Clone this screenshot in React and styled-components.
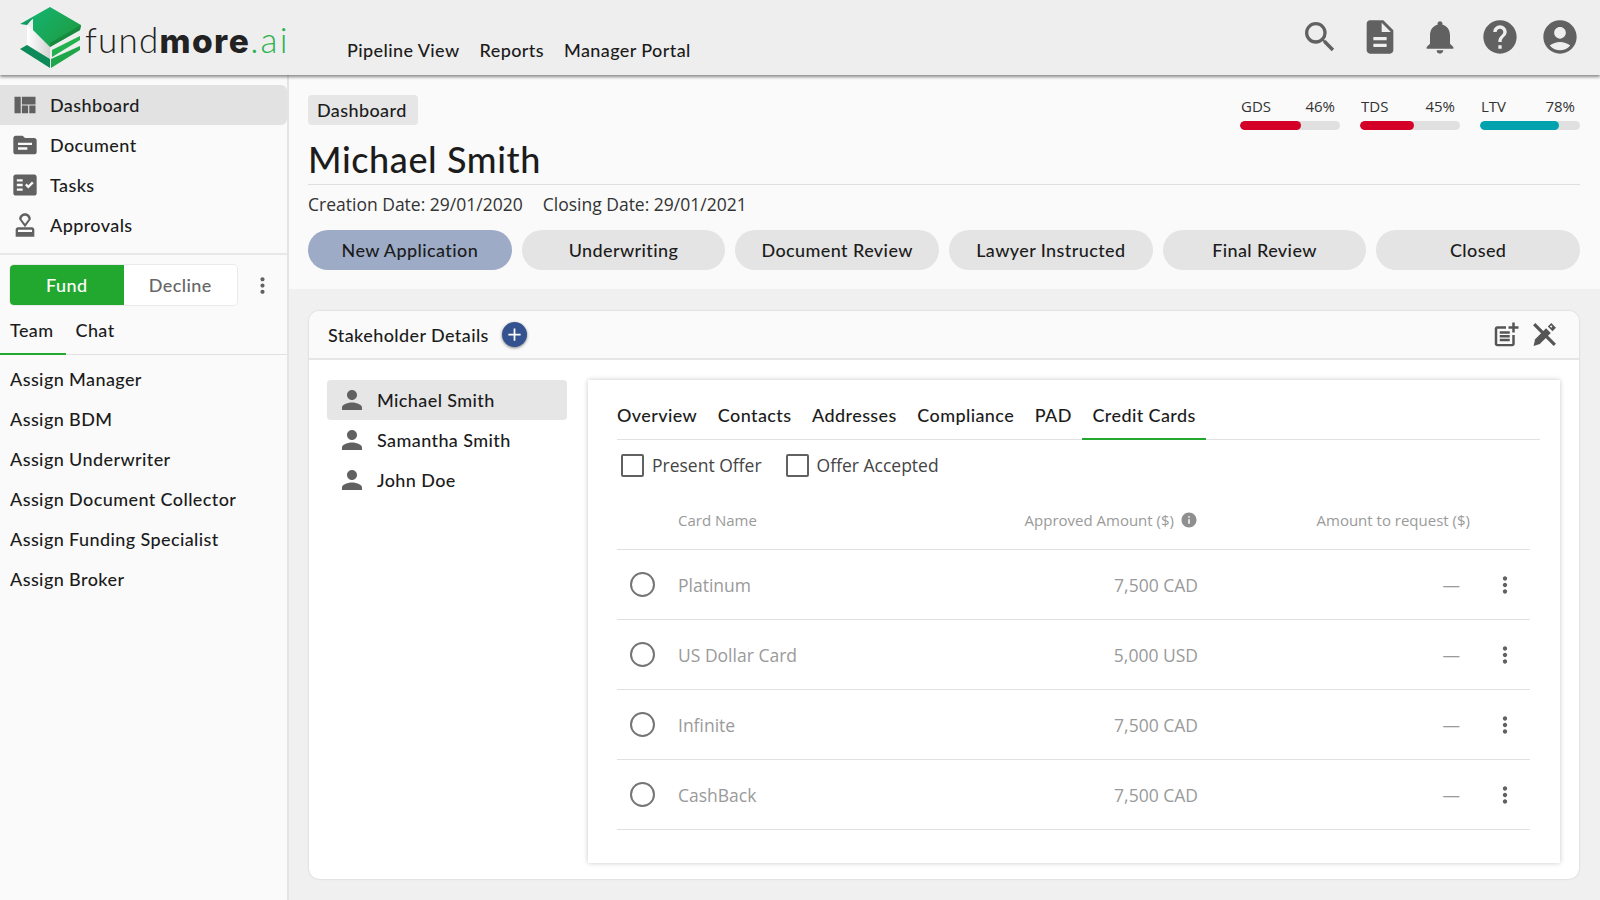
import React from 'react';
import styled, { createGlobalStyle } from 'styled-components';
import {
  MdViewQuilt, MdTopic, MdFactCheck, MdOutlineApproval, MdSearch, MdDescription,
  MdNotifications, MdHelp, MdAccountCircle, MdPerson, MdAdd, MdOutlinePostAdd,
  MdInfo, MdMoreVert,
} from 'react-icons/md';

const HEAD = '"Lato", "Noto Sans", sans-serif';
const BODY = '"Open Sans", "Noto Sans", sans-serif';

const GlobalStyle = createGlobalStyle`
  html, body { margin: 0; padding: 0; background: #f0f0f0; }
  body { font-family: ${HEAD}; color: #1c1c1c; overflow: hidden; letter-spacing: 0.4px; }
  * { box-sizing: border-box; }
`;

const Page = styled.div`
  width: 1600px;
  height: 900px;
  display: flex;
  flex-direction: column;
`;

const Header = styled.header`
  height: 75px;
  flex: none;
  display: flex;
  align-items: stretch;
  background: #eeeeee;
  box-shadow: 0 2px 3px rgba(0, 0, 0, 0.45);
  position: relative;
  z-index: 2;
`;

const Brand = styled.div`
  display: flex;
  align-items: flex-start;
  width: 347px;
`;

const BrandText = styled.div`
  font-family: "Lato", sans-serif;
  font-size: 35px;
  line-height: 1;
  margin: 22px 0 0 -45px;
  letter-spacing: 1.2px;
  font-weight: 300;
  color: #222;
  b { font-weight: 800; font-family: "Inter", sans-serif; font-size: 33.5px; letter-spacing: 1.4px; }
  span { color: #2bb24c; letter-spacing: 2.2px; }
`;

const Nav = styled.nav`
  display: flex;
  gap: 20px;
  padding-top: 40px;
  font-size: 18px;
  font-weight: 500;
  flex: 1;
`;

const NavLink = styled.a`
  line-height: 21px;
  height: 21px;
`;

const HeaderIcons = styled.div`
  display: flex;
  align-items: center;
  gap: 20px;
  padding: 0 20px 2px 0;
  color: #616161;
  height: 75px;
`;

const HeaderIcon = styled.span`
  display: flex;
  width: 40px;
  justify-content: center;
`;

const Body = styled.div`
  flex: 1;
  display: flex;
  min-height: 0;
`;

const Sidebar = styled.aside`
  width: 289px;
  flex: none;
  background: #fafafa;
  border-right: 2px solid #e4e4e4;
  padding-top: 10px;
`;

const MenuItem = styled.div`
  height: 40px;
  display: flex;
  align-items: center;
  padding-left: 11px;
  gap: 11px;
  font-size: 18px;
  font-weight: 500;
  border-radius: 0 6px 6px 0;
  background: ${p => (p.$active ? '#e2e2e2' : 'transparent')};
  svg { color: #616161; flex: none; }
`;

const SideDivider = styled.div`
  height: 2px;
  background: #e8e8e8;
  margin-top: 8px;
`;

const ActionRow = styled.div`
  display: flex;
  align-items: center;
  padding: 10px 0 0 10px;
`;

const ButtonGroup = styled.div`
  display: flex;
  width: 227px;
  height: 40px;
  border-radius: 4px;
  overflow: hidden;
  background: #fff;
  box-shadow: 0 0 0 1px #eaeaea;
`;

const GroupButton = styled.div`
  flex: 1;
  display: flex;
  align-items: center;
  justify-content: center;
  font-size: 18px;
  font-weight: 500;
  background: ${p => (p.$primary ? '#23a82f' : '#fff')};
  color: ${p => (p.$primary ? '#fff' : '#666')};
`;

const DotsButton = styled.span`
  display: flex;
  color: #616161;
  margin-left: ${p => p.$left || 0}px;
`;

const SideTabs = styled.div`
  display: flex;
  height: 50px;
  border-bottom: 1px solid #e2e2e2;
`;

const SideTab = styled.div`
  padding: 14px 12px 0 10px;
  font-size: 18px;
  font-weight: 500;
  height: 50px;
  border-bottom: ${p => (p.$active ? '2px solid #23a82f' : 'none')};
`;

const AssignList = styled.div`
  padding-top: 4px;
`;

const AssignItem = styled.div`
  height: 40px;
  line-height: 40px;
  padding-left: 10px;
  font-size: 18px;
  font-weight: 500;
`;

const Main = styled.main`
  flex: 1;
  display: flex;
  flex-direction: column;
  min-width: 0;
`;

const Summary = styled.section`
  height: 214px;
  flex: none;
  background: #fafafa;
  padding: 20px 20px 0 19px;
`;

const SummaryTop = styled.div`
  display: flex;
  justify-content: space-between;
  height: 35px;
`;

const Chip = styled.div`
  height: 30px;
  padding: 0 11px 0 9px;
  display: flex;
  align-items: center;
  background: #e6e6e6;
  border-radius: 4px;
  font-size: 18px;
  font-weight: 500;
`;

const Stats = styled.div`
  display: flex;
  gap: 20px;
`;

const Stat = styled.div`
  width: 100px;
`;

const StatLabels = styled.div`
  display: flex;
  justify-content: space-between;
  padding: 1px 5px 0 1px;
  height: 26px;
  letter-spacing: 0;
  font: 400 15px/20px ${BODY};
  color: #333;
`;

const StatTrack = styled.div`
  height: 9px;
  border-radius: 5px;
  background: #e0e0e0;
  overflow: hidden;
`;

const StatFill = styled.div`
  height: 100%;
  border-radius: 5px;
  background: ${p => p.$color};
`;

const Name = styled.h1`
  margin: 0;
  font-size: 36px;
  font-weight: 500;
  letter-spacing: 0.6px;
  line-height: 58px;
  height: 55px;
  border-bottom: 1px solid #dfdfdf;
  color: #1c1c1c;
`;

const Dates = styled.div`
  display: flex;
  gap: 20px;
  letter-spacing: 0;
  font: 400 17.5px/39px ${BODY};
  height: 45px;
  color: #333;
`;

const Stages = styled.div`
  display: grid;
  grid-template-columns: repeat(6, 1fr);
  gap: 10px;
`;

const Stage = styled.div`
  height: 40px;
  border-radius: 20px;
  display: flex;
  align-items: center;
  justify-content: center;
  font-size: 18px;
  font-weight: 500;
  background: ${p => (p.$active ? '#9dabc6' : '#e4e4e4')};
`;

const Content = styled.section`
  flex: 1;
  padding: 22px 21px 21px 20px;
  background: #f0f0f0;
  min-height: 0;
  display: flex;
`;

const Card = styled.div`
  flex: 1;
  background: #fff;
  border-radius: 10px;
  box-shadow: 0 0 2px rgba(0, 0, 0, 0.2);
  display: flex;
  flex-direction: column;
  overflow: hidden;
`;

const CardHeader = styled.div`
  height: 49px;
  flex: none;
  background: #fafafa;
  border-bottom: 2px solid #e6e6e6;
  display: flex;
  align-items: center;
  padding: 0 22px 0 19px;
  font-size: 18px;
  font-weight: 500;
`;

const AddButton = styled.span`
  width: 25px;
  height: 25px;
  margin-left: 13px;
  border-radius: 50%;
  background: #33528f;
  color: #fff;
  display: flex;
  align-items: center;
  justify-content: center;
  box-shadow: 0 1px 3px rgba(0, 0, 0, 0.5);
`;

const CardTools = styled.div`
  margin-left: auto;
  display: flex;
  align-items: center;
  gap: 11px;
  color: #555;
`;

const CardBody = styled.div`
  flex: 1;
  display: flex;
  gap: 21px;
  padding: 20px 19px 16px 18px;
  min-height: 0;
`;

const People = styled.div`
  width: 240px;
  flex: none;
`;

const Person = styled.div`
  height: 40px;
  display: flex;
  align-items: center;
  padding-left: 10px;
  gap: 10px;
  font-size: 18px;
  font-weight: 500;
  border-radius: 4px;
  background: ${p => (p.$active ? '#e6e6e6' : 'transparent')};
  svg { color: #616161; }
`;

const Panel = styled.div`
  flex: 1;
  background: #fff;
  box-shadow: 0 0 5px rgba(0, 0, 0, 0.22);
  padding: 0 20px 0 29px;
`;

const Tabs = styled.div`
  display: flex;
  height: 60px;
  border-bottom: 1px solid #e2e2e2;
`;

const Tab = styled.div`
  padding: 24px 10px 0;
  height: 60px;
  font-size: 18px;
  font-weight: 500;
  margin-left: ${p => (p.$first ? '-10px' : '0.6px')};
  border-bottom: ${p => (p.$active ? '2px solid #23a82f' : 'none')};
`;

const Checks = styled.div`
  display: flex;
  height: 50px;
  align-items: center;
  padding-left: 4px;
  gap: 24px;
`;

const Check = styled.label`
  display: flex;
  align-items: center;
  gap: 8px;
  letter-spacing: 0;
  font: 400 17.5px/24px ${BODY};
  color: #444;
`;

const Box = styled.span`
  width: 23px;
  height: 23px;
  border: 2px solid #616161;
  border-radius: 2px;
`;

const TableWrap = styled.div`
  margin-right: 10px;
`;

const Row = styled.div`
  display: grid;
  grid-template-columns: 61px 1fr 220px 272px 60px;
  align-items: center;
  height: ${p => (p.$head ? '60px' : '70px')};
  border-bottom: 1px solid #e0e0e0;
  letter-spacing: 0;
  font: 400 ${p => (p.$head ? '15px' : '17.5px')}/22px ${BODY};
  color: #9a9a9a;
`;

const Radio = styled.span`
  width: 25px;
  height: 25px;
  margin-left: 13px;
  border: 2px solid #757575;
  border-radius: 50%;
`;

const Right = styled.div`
  display: flex;
  justify-content: flex-end;
  align-items: center;
  gap: 6px;
  padding-right: ${p => p.$pad || 0}px;
  svg { color: #8f8f8f; }
`;

const stats = [
  { label: 'GDS', value: 46, fill: 61, color: '#d50027' },
  { label: 'TDS', value: 45, fill: 54, color: '#d50027' },
  { label: 'LTV', value: 78, fill: 79, color: '#00a3ad' },
];

const stages = ['New Application', 'Underwriting', 'Document Review', 'Lawyer Instructed', 'Final Review', 'Closed'];
const assigns = ['Assign Manager', 'Assign BDM', 'Assign Underwriter', 'Assign Document Collector', 'Assign Funding Specialist', 'Assign Broker'];
const cards = [
  ['Platinum', '7,500 CAD'],
  ['US Dollar Card', '5,000 USD'],
  ['Infinite', '7,500 CAD'],
  ['CashBack', '7,500 CAD'],
];

const Logo = () => (
  <svg width="130" height="80" viewBox="0 0 130 80" style={{ flex: 'none' }}>
    <defs>
      <linearGradient id="roof" x1="0" y1="0" x2="1" y2="0.6">
        <stop offset="0" stopColor="#12b878" />
        <stop offset="1" stopColor="#1e9d45" />
      </linearGradient>
      <linearGradient id="wall" x1="0" y1="0" x2="1" y2="0">
        <stop offset="0" stopColor="#ffffff" />
        <stop offset="1" stopColor="#d4d4d4" />
      </linearGradient>
    </defs>
    <polygon points="27,25 50,44 50,59 27,44" fill="url(#wall)" />
    <polygon points="20,24 50,7 81,25 80,30 50,47 33,30 33,19" fill="url(#roof)" />
    <polygon points="20,24 33,18 27,25" fill="#0f9a63" />
    <polygon points="81,25 80,30 50,47 50,43" fill="#178a3f" />
    <polygon points="52,50 80,36 80,40 52,57" fill="#22b14c" />
    <polygon points="51,59 80,46 80,50 51,68" fill="#1fa64a" />
    <polygon points="20,49 27,45 50,59 50,68" fill="#0d8a5a" />
  </svg>
);

const ToolsIcon = () => (
  <svg width="25" height="25" viewBox="0 0 24 24" fill="currentColor">
    <path d="M1 3.2 3.2 1 23 20.8 20.8 23z" />
    <path d="M1.5 23 3 16.5 13.5 6 18 10.5 7.5 21z" />
    <path d="M15.2 4.3 18.5 1 23 5.5 19.7 8.8zM17.2 4.3l1.3 1.3 1.1-1.1-1.3-1.3z" fillRule="evenodd" />
  </svg>
);

const App = () => (
  <Page>
    <GlobalStyle />
    <Header>
      <Brand>
        <Logo />
        <BrandText>fund<b>more</b><span>.ai</span></BrandText>
      </Brand>
      <Nav>
        <NavLink>Pipeline View</NavLink>
        <NavLink>Reports</NavLink>
        <NavLink>Manager Portal</NavLink>
      </Nav>
      <HeaderIcons>
        <HeaderIcon><MdSearch size={40} /></HeaderIcon>
        <HeaderIcon><MdDescription size={40} /></HeaderIcon>
        <HeaderIcon><MdNotifications size={40} /></HeaderIcon>
        <HeaderIcon><MdHelp size={40} /></HeaderIcon>
        <HeaderIcon><MdAccountCircle size={40} /></HeaderIcon>
      </HeaderIcons>
    </Header>
    <Body>
      <Sidebar>
        <MenuItem $active><MdViewQuilt size={28} />Dashboard</MenuItem>
        <MenuItem><MdTopic size={28} />Document</MenuItem>
        <MenuItem><MdFactCheck size={28} />Tasks</MenuItem>
        <MenuItem><MdOutlineApproval size={28} />Approvals</MenuItem>
        <SideDivider />
        <ActionRow>
          <ButtonGroup>
            <GroupButton $primary>Fund</GroupButton>
            <GroupButton>Decline</GroupButton>
          </ButtonGroup>
          <DotsButton $left={13}><MdMoreVert size={25} /></DotsButton>
        </ActionRow>
        <SideTabs>
          <SideTab $active>Team</SideTab>
          <SideTab>Chat</SideTab>
        </SideTabs>
        <AssignList>
          {assigns.map(a => <AssignItem key={a}>{a}</AssignItem>)}
        </AssignList>
      </Sidebar>
      <Main>
        <Summary>
          <SummaryTop>
            <Chip>Dashboard</Chip>
            <Stats>
              {stats.map(s => (
                <Stat key={s.label}>
                  <StatLabels><span>{s.label}</span><span>{s.value}%</span></StatLabels>
                  <StatTrack><StatFill $color={s.color} style={{ width: `${s.fill}%` }} /></StatTrack>
                </Stat>
              ))}
            </Stats>
          </SummaryTop>
          <Name>Michael Smith</Name>
          <Dates>
            <span>Creation Date: 29/01/2020</span>
            <span>Closing Date: 29/01/2021</span>
          </Dates>
          <Stages>
            {stages.map((s, i) => <Stage key={s} $active={i === 0}>{s}</Stage>)}
          </Stages>
        </Summary>
        <Content>
          <Card>
            <CardHeader>
              Stakeholder Details
              <AddButton><MdAdd size={21} /></AddButton>
              <CardTools>
                <MdOutlinePostAdd size={30} />
                <ToolsIcon />
              </CardTools>
            </CardHeader>
            <CardBody>
              <People>
                <Person $active><MdPerson size={30} />Michael Smith</Person>
                <Person><MdPerson size={30} />Samantha Smith</Person>
                <Person><MdPerson size={30} />John Doe</Person>
              </People>
              <Panel>
                <Tabs>
                  <Tab $first>Overview</Tab>
                  <Tab>Contacts</Tab>
                  <Tab>Addresses</Tab>
                  <Tab>Compliance</Tab>
                  <Tab>PAD</Tab>
                  <Tab $active>Credit Cards</Tab>
                </Tabs>
                <Checks>
                  <Check><Box />Present Offer</Check>
                  <Check><Box />Offer Accepted</Check>
                </Checks>
                <TableWrap>
                  <Row $head>
                    <span />
                    <span>Card Name</span>
                    <Right>Approved Amount ($) <MdInfo size={18} /></Right>
                    <Right>Amount to request ($)</Right>
                    <span />
                  </Row>
                  {cards.map(([name, amount]) => (
                    <Row key={name}>
                      <Radio />
                      <span>{name}</span>
                      <Right>{amount}</Right>
                      <Right $pad={10}>—</Right>
                      <DotsButton $left={22}><MdMoreVert size={26} /></DotsButton>
                    </Row>
                  ))}
                </TableWrap>
              </Panel>
            </CardBody>
          </Card>
        </Content>
      </Main>
    </Body>
  </Page>
);

export default App;
